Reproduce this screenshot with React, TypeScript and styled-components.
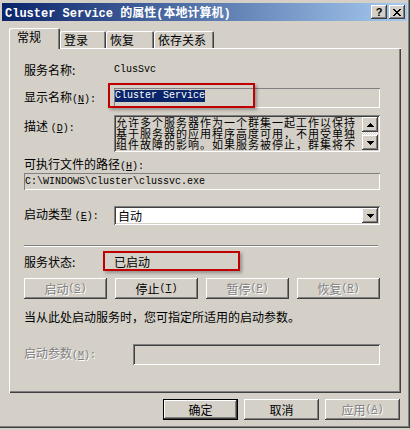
import React from "react";
import styled, { createGlobalStyle, css } from "styled-components";

const GlobalStyle = createGlobalStyle`
  html, body { margin: 0; padding: 0; background: #D4D0C8; }
  body {
    font-family: "Noto Sans CJK SC", "Liberation Sans", sans-serif;
    font-size: 12px;
    color: #000;
  }
  * { box-sizing: border-box; }
`;

const raised = css`
  background: #D4D0C8;
  box-shadow: inset -1px -1px #404040, inset 1px 1px #fff, inset -2px -2px #808080, inset 2px 2px #D4D0C8;
`;
const sunken = css`
  box-shadow: inset 1px 1px #808080, inset -1px -1px #fff, inset 2px 2px #404040, inset -2px -2px #D4D0C8;
`;
const flat = css`
  box-shadow: inset 1px 1px #808080, inset -1px -1px #fff;
`;

const Window = styled.div`
  width: 410px;
  height: 428px;
  padding: 3px 3px 0 2px;
  background: #D4D0C8;
  box-shadow: inset -1px -1px #404040, inset -2px -2px #808080;
`;

const TitleBar = styled.div`
  height: 18px;
  display: flex;
  align-items: center;
  padding: 0 2px 0 3px;
  background: linear-gradient(to right, #0A246A, #A6CAF0);
`;

const Title = styled.div`
  flex: 1;
  color: #fff;
  font-family: "Liberation Mono", "Noto Sans CJK SC", monospace;
  font-weight: bold;
  font-size: 12px;
  white-space: nowrap;
`;

const CaptionButton = styled.div<{ $gap?: number }>`
  width: 16px;
  height: 14px;
  margin-left: ${(p) => p.$gap ?? 0}px;
  ${raised};
  display: flex;
  align-items: center;
  justify-content: center;
  font-family: "Liberation Sans", sans-serif;
  font-weight: bold;
  font-size: 11px;
  line-height: 14px;
  color: #000;
`;

const Body = styled.div`
  padding: 7px 0 0 7px;
`;

const TabStrip = styled.div`
  display: flex;
  align-items: flex-end;
  height: 20px;
  position: relative;
  z-index: 1;
`;

const Tab = styled.div<{ $active?: boolean; $w: number }>`
  width: ${(p) => p.$w}px;
  height: ${(p) => (p.$active ? 21 : 17)}px;
  margin-bottom: ${(p) => (p.$active ? -1 : 0)}px;
  padding: 2px 0 0 ${(p) => (p.$active ? 8 : 4)}px;
  background: #D4D0C8;
  border-radius: 2px 2px 0 0;
  line-height: 14px;
  white-space: nowrap;
  box-shadow: inset 1px 1px #fff, inset -1px 0 #404040, inset -2px 0 #808080;
`;

const Panel = styled.div`
  width: 392px;
  height: 345px;
  padding: 15px 21px 0 15px;
  display: flex;
  flex-direction: column;
  box-shadow: inset 1px 1px #fff, inset -1px -1px #404040, inset -2px -2px #808080;
`;

const Row = styled.div<{ $mt: number; $h: number; $top?: boolean }>`
  display: flex;
  align-items: ${(p) => (p.$top ? "flex-start" : "center")};
  margin-top: ${(p) => p.$mt}px;
  height: ${(p) => p.$h}px;
  flex-shrink: 0;
`;

const Label = styled.span<{ $w?: number; $disabled?: boolean; $pt?: number }>`
  width: ${(p) => p.$w ?? 90}px;
  flex-shrink: 0;
  line-height: 14px;
  white-space: nowrap;
  padding-top: ${(p) => p.$pt ?? 0}px;
  color: ${(p) => (p.$disabled ? "#808080" : "#000")};
  text-shadow: ${(p) => (p.$disabled ? "1px 1px #fff" : "none")};
`;

const Key = styled.span`
  font-family: "Liberation Mono", monospace;
  font-size: 10px;
`;

const MonoText = styled.span`
  font-family: "Liberation Mono", monospace;
  font-size: 10px;
  line-height: 12px;
  white-space: pre;
`;

const DisplayField = styled.div`
  flex: 1;
  height: 20px;
  position: relative;
  display: flex;
  align-items: flex-start;
  padding: 2px 0 0 1px;
  background: #D4D0C8;
  ${flat};
`;

const Selected = styled.span`
  display: block;
  height: 12px;
  background: #0A246A;
  color: #fff;
  font-family: "Liberation Mono", monospace;
  font-size: 10px;
  line-height: 12px;
  white-space: pre;
`;

const Callout = styled.div<{ $l: number; $t: number; $w: number; $h: number }>`
  position: absolute;
  left: ${(p) => p.$l}px;
  top: ${(p) => p.$t}px;
  width: ${(p) => p.$w}px;
  height: ${(p) => p.$h}px;
  border: 2px solid #C00000;
  box-shadow: 2px 2px 3px rgba(0, 0, 0, 0.3);
  pointer-events: none;
`;

const DescBox = styled.div`
  flex: 1;
  height: 37px;
  padding: 2px;
  display: flex;
  background: #D4D0C8;
  ${sunken};
`;

const DescText = styled.div`
  flex: 1;
  font-size: 11px;
  letter-spacing: 1px;
  line-height: 11px;
  white-space: pre;
  overflow: hidden;
`;

const ScrollBar = styled.div`
  width: 16px;
  display: flex;
  flex-direction: column;
  justify-content: space-between;
  background: repeating-conic-gradient(#fff 0 25%, #D4D0C8 0 50%) 0 0 / 2px 2px;
`;

const ArrowButton = styled.div<{ $w?: number; $h?: number }>`
  width: ${(p) => p.$w ?? 16}px;
  height: ${(p) => p.$h ?? 15}px;
  ${raised};
  display: flex;
  align-items: center;
  justify-content: center;
  flex-shrink: 0;
`;

const PathField = styled.div`
  flex: 1;
  height: 17px;
  padding-left: 1px;
  display: flex;
  align-items: center;
  ${flat};
`;

const Combo = styled.div`
  flex: 1;
  height: 19px;
  padding: 2px;
  display: flex;
  align-items: center;
  background: #fff;
  ${sunken};
`;

const ComboText = styled.span`
  flex: 1;
  padding-left: 2px;
  line-height: 14px;
`;

const Separator = styled.div`
  width: 354px;
  height: 2px;
  border-top: 1px solid #808080;
  border-bottom: 1px solid #fff;
`;

const StatusValue = styled.span`
  position: relative;
  line-height: 14px;
`;

const ButtonRow = styled.div`
  flex: 1;
  display: flex;
  justify-content: space-between;
`;

const Button = styled.div<{ $w: number; $disabled?: boolean; $default?: boolean }>`
  width: ${(p) => p.$w}px;
  height: 21px;
  display: flex;
  align-items: center;
  justify-content: center;
  line-height: 14px;
  white-space: nowrap;
  background: #D4D0C8;
  color: ${(p) => (p.$disabled ? "#808080" : "#000")};
  text-shadow: ${(p) => (p.$disabled ? "1px 1px #fff" : "none")};
  box-shadow: ${(p) =>
    p.$default
      ? "inset 0 0 0 1px #000, inset -2px -2px #404040, inset 2px 2px #fff, inset -3px -3px #808080"
      : "inset -1px -1px #404040, inset 1px 1px #fff, inset -2px -2px #808080"};
`;

const Hint = styled.span`
  line-height: 14px;
  white-space: nowrap;
`;

const ParamField = styled.div`
  flex: 1;
  height: 21px;
  background: #D4D0C8;
  ${sunken};
`;

const Footer = styled.div`
  width: 392px;
  display: flex;
  justify-content: flex-end;
  gap: 6px;
  padding-right: 1px;
  margin-top: 6px;
`;

const UpArrow = () => (
  <svg width="7" height="4" viewBox="0 0 7 4" shapeRendering="crispEdges">
    <path d="M3 0h1v1h1v1h1v1h1v1H0v-1h1v-1h1v-1h1z" fill="#000" />
  </svg>
);

const DownArrow = () => (
  <svg width="7" height="4" viewBox="0 0 7 4" shapeRendering="crispEdges">
    <path d="M0 0h7v1h-1v1h-1v1h-1v1h-1v-1h-1v-1h-1v-1h-1z" fill="#000" />
  </svg>
);

const CloseGlyph = () => (
  <svg width="8" height="7" viewBox="0 0 8 7" shapeRendering="crispEdges">
    <path
      d="M0 0h2v1H0z M6 0h2v1H6z M1 1h2v1H1z M5 1h2v1H5z M2 2h4v1H2z M3 3h2v1H3z M2 4h4v1H2z M1 5h2v1H1z M5 5h2v1H5z M0 6h2v1H0z M6 6h2v1H6z"
      fill="#000"
    />
  </svg>
);

const K = ({ k }: { k: string }) => (
  <Key>
    (<u>{k}</u>)
  </Key>
);

export default function App() {
  return (
    <>
      <GlobalStyle />
      <Window>
        <TitleBar>
          <Title>Cluster Service 的属性(本地计算机)</Title>
          <CaptionButton>?</CaptionButton>
          <CaptionButton $gap={2}>
            <CloseGlyph />
          </CaptionButton>
        </TitleBar>
        <Body>
          <TabStrip>
            <Tab $active $w={51}>常规</Tab>
            <Tab $w={46}>登录</Tab>
            <Tab $w={48}>恢复</Tab>
            <Tab $w={60}>依存关系</Tab>
          </TabStrip>
          <Panel>
            <Row $mt={0} $h={14}>
              <Label>服务名称:</Label>
              <MonoText>ClusSvc</MonoText>
            </Row>
            <Row $mt={11} $h={20}>
              <Label>
                显示名称<K k="N" />
                <Key>:</Key>
              </Label>
              <DisplayField>
                <Selected>Cluster Service</Selected>
                <Callout $l={-6} $t={-5} $w={147} $h={25} />
              </DisplayField>
            </Row>
            <Row $mt={7} $h={37} $top>
              <Label $pt={4}>
                描述 <K k="D" />
                <Key>:</Key>
              </Label>
              <DescBox>
                <DescText>
                  {"允许多个服务器作为一个群集一起工作以保持\n基于服务器的应用程序高度可用，不用受单独\n组件故障的影响。如果服务被停止，群集将不"}
                </DescText>
                <ScrollBar>
                  <ArrowButton>
                    <UpArrow />
                  </ArrowButton>
                  <ArrowButton>
                    <DownArrow />
                  </ArrowButton>
                </ScrollBar>
              </DescBox>
            </Row>
            <Row $mt={6} $h={14}>
              <Label $w={200}>
                可执行文件的路径<K k="H" />
                <Key>:</Key>
              </Label>
            </Row>
            <Row $mt={1} $h={17}>
              <PathField>
                <MonoText>C:\WINDOWS\Cluster\clussvc.exe</MonoText>
              </PathField>
            </Row>
            <Row $mt={16} $h={19}>
              <Label>
                启动类型 <K k="E" />
                <Key>:</Key>
              </Label>
              <Combo>
                <ComboText>自动</ComboText>
                <ArrowButton $h={15}>
                  <DownArrow />
                </ArrowButton>
              </Combo>
            </Row>
            <Row $mt={20} $h={2}>
              <Separator />
            </Row>
            <Row $mt={8} $h={14}>
              <Label>服务状态:</Label>
              <StatusValue>
                已启动
                <Callout $l={-11} $t={-4} $w={137} $h={20} />
              </StatusValue>
            </Row>
            <Row $mt={9} $h={21}>
              <ButtonRow>
                <Button $w={83} $disabled>
                  启动<K k="S" />
                </Button>
                <Button $w={83}>
                  停止<K k="T" />
                </Button>
                <Button $w={83} $disabled>
                  暂停<K k="P" />
                </Button>
                <Button $w={83} $disabled>
                  恢复<K k="R" />
                </Button>
              </ButtonRow>
            </Row>
            <Row $mt={11} $h={14}>
              <Hint>当从此处启动服务时，您可指定所适用的启动参数。</Hint>
            </Row>
            <Row $mt={20} $h={21}>
              <Label $w={109} $disabled>
                启动参数<K k="M" />
                <Key>:</Key>
              </Label>
              <ParamField />
            </Row>
          </Panel>
          <Footer>
            <Button $w={75} $default>
              确定
            </Button>
            <Button $w={75}>取消</Button>
            <Button $w={75} $disabled>
              应用<K k="A" />
            </Button>
          </Footer>
        </Body>
      </Window>
    </>
  );
}
